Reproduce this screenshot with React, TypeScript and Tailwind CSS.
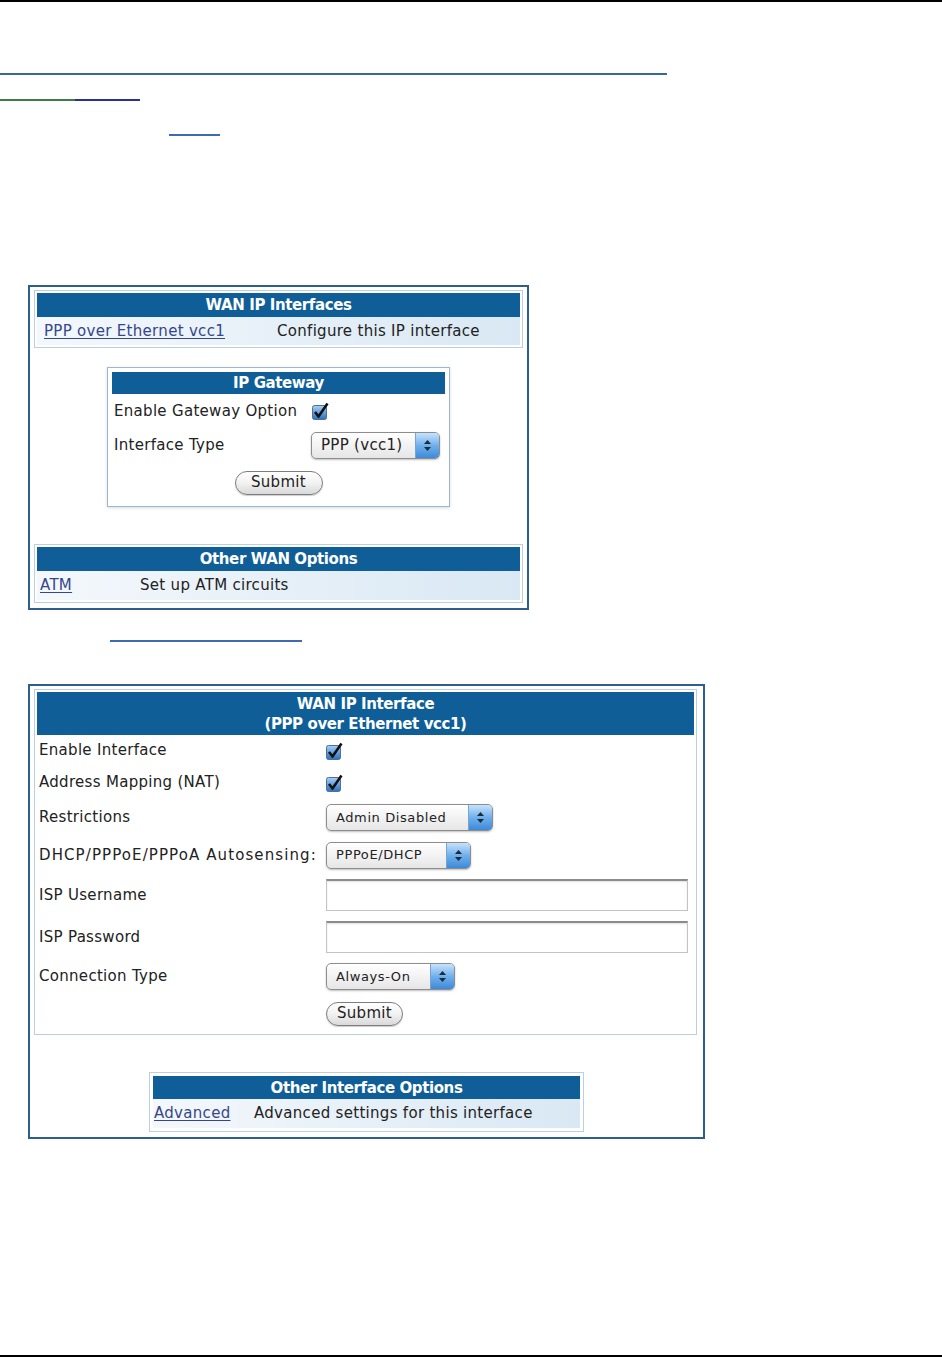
import type {ReactNode} from 'react';

const FONT = "font-['DejaVu_Sans','Verdana',sans-serif]";

function Checkbox() {
  return (
    <svg width="17" height="18" viewBox="0 0 17 18" className="block">
      <defs>
        <linearGradient id="cbfill" x1="0" y1="0" x2="0" y2="1">
          <stop offset="0" stopColor="#a8d0f4" />
          <stop offset="1" stopColor="#2a6fc2" />
        </linearGradient>
      </defs>
      <rect x="0.5" y="3.5" width="14" height="14" rx="2" fill="url(#cbfill)" stroke="#50708f" />
      <path d="M3 10 L6.5 14.5 L15.5 1.5" stroke="#111" strokeWidth="2.6" fill="none" strokeLinejoin="round" />
    </svg>
  );
}

function Select({label, width, small}: {label: string; width: string; small?: boolean}) {
  return (
    <div
      className={`flex h-[27px] ${width} overflow-hidden rounded-[5px] border border-[#8d8d8d] bg-gradient-to-b from-white to-[#e6e6e6] shadow-[0_1px_2px_rgba(0,0,0,0.25)]`}>
      <div
        className={`flex-1 flex items-center pl-[9px] text-[#222] ${small ? 'text-[13px] tracking-[0.6px]' : 'text-[15px]'}`}>
        {label}
      </div>
      <div className="w-[24px] flex flex-col items-center justify-center gap-[3px] bg-gradient-to-b from-[#c6e2fb] via-[#6fb0ec] to-[#3d8ad8] border-l border-[#7aa4cf]">
        <svg width="7" height="4" viewBox="0 0 7 4">
          <path d="M0 4 L3.5 0 L7 4 Z" fill="#1d2a3a" />
        </svg>
        <svg width="7" height="4" viewBox="0 0 7 4">
          <path d="M0 0 L3.5 4 L7 0 Z" fill="#1d2a3a" />
        </svg>
      </div>
    </div>
  );
}

function SubmitButton({width}: {width: string}) {
  return (
    <div
      className={`flex h-[24px] ${width} items-center justify-center rounded-full border border-[#7d7d7d] bg-gradient-to-b from-white via-[#f2f2f2] to-[#d9d9d9] text-[15px] text-[#222] shadow-[0_1px_1px_rgba(0,0,0,0.2)]`}>
      Submit
    </div>
  );
}

function TextInput() {
  return (
    <div className="h-[32px] w-[362px] border border-[#c4c4c4] border-t-2 border-t-[#8c8c8c] bg-white shadow-[inset_0_1px_2px_rgba(0,0,0,0.12)]" />
  );
}

function Header({children, height = 'h-[24px]'}: {children: ReactNode; height?: string}) {
  return (
    <div
      className={`${height} flex flex-col items-center justify-center bg-[#0f5e97] text-white font-bold text-[15px] tracking-[-0.4px] leading-[20px]`}>
      {children}
    </div>
  );
}

function Link({children}: {children: ReactNode}) {
  return <span className="text-[#34478c] underline underline-offset-2 decoration-1">{children}</span>;
}

export default function App() {
  return (
    <div className={`w-[942px] h-[1357px] bg-white flex flex-col ${FONT} tracking-[0.3px] text-[15px] text-[#222]`}>
      {/* page rules and link underlines */}
      <div className="h-[2px] bg-black" />
      <div className="mt-[71px] h-[2px] w-[667px] bg-[#35679c]" />
      <div className="mt-[24px] flex h-[2px] w-[140px]">
        <div className="w-[75px] bg-[#3f7a4a]" />
        <div className="flex-1 bg-[#2a2fa0]" />
      </div>
      <div className="mt-[33px] ml-[169px] h-[2px] w-[51px] bg-[#3d6ab2]" />

      {/* first screenshot */}
      <div className="mt-[149px] ml-[28px] w-[501px] h-[325px] border-2 border-[#2d5e8c] bg-white">
        <div className="ml-[4px] mt-[3px] w-[489px] border border-[#b9d0e3] p-[2px]">
          <Header>WAN IP Interfaces</Header>
          <div className="h-[28px] flex items-center bg-gradient-to-r from-[#f4f8fc] to-[#d9e8f4]">
            <div className="w-[240px] pl-[7px]">
              <Link>PPP over Ethernet vcc1</Link>
            </div>
            <div>Configure this IP interface</div>
          </div>
        </div>

        <div className="mx-auto mt-[19px] w-[343px] border border-[#9bb8d2] p-[4px] shadow-[0_1px_3px_rgba(0,0,0,0.15)]">
          <Header height="h-[22px]">IP Gateway</Header>
          <div className="h-[34px] flex items-center pl-[2px]">
            <div className="w-[198px]">Enable Gateway Option</div>
            <Checkbox />
          </div>
          <div className="h-[35px] flex items-center pl-[2px]">
            <div className="w-[197px]">Interface Type</div>
            <Select label="PPP (vcc1)" width="w-[129px]" />
          </div>
          <div className="h-[39px] flex items-center justify-center">
            <SubmitButton width="w-[88px]" />
          </div>
        </div>

        <div className="ml-[4px] mt-[37px] w-[489px] border border-[#b9d0e3] p-[2px]">
          <Header>Other WAN Options</Header>
          <div className="h-[29px] flex items-center bg-gradient-to-r from-[#f4f8fc] to-[#d9e8f4]">
            <div className="w-[103px] pl-[3px]">
              <Link>ATM</Link>
            </div>
            <div>Set up ATM circuits</div>
          </div>
        </div>
      </div>

      <div className="mt-[30px] ml-[110px] h-[2px] w-[192px] bg-[#3d6ab2]" />

      {/* second screenshot */}
      <div className="mt-[42px] ml-[28px] w-[677px] h-[455px] border-2 border-[#2d5e8c] bg-white">
        <div className="ml-[4px] mt-[3px] w-[663px] border border-[#b9d0e3] p-[2px]">
          <Header height="h-[43px]">
            <div>WAN IP Interface</div>
            <div>(PPP over Ethernet vcc1)</div>
          </Header>
          <div className="h-[31px] flex items-center">
            <div className="w-[289px] pl-[2px]">Enable Interface</div>
            <Checkbox />
          </div>
          <div className="h-[33px] flex items-center">
            <div className="w-[289px] pl-[2px]">Address Mapping (NAT)</div>
            <Checkbox />
          </div>
          <div className="h-[37px] flex items-center">
            <div className="w-[289px] pl-[2px]">Restrictions</div>
            <Select label="Admin Disabled" width="w-[167px]" small />
          </div>
          <div className="h-[38px] flex items-center">
            <div className="w-[289px] pl-[2px] tracking-[1.1px]">DHCP/PPPoE/PPPoA Autosensing:</div>
            <Select label="PPPoE/DHCP" width="w-[145px]" small />
          </div>
          <div className="h-[42px] flex items-center">
            <div className="w-[289px] pl-[2px]">ISP Username</div>
            <TextInput />
          </div>
          <div className="h-[42px] flex items-center">
            <div className="w-[289px] pl-[2px]">ISP Password</div>
            <TextInput />
          </div>
          <div className="h-[37px] flex items-center">
            <div className="w-[289px] pl-[2px]">Connection Type</div>
            <Select label="Always-On" width="w-[129px]" small />
          </div>
          <div className="h-[37px] flex items-center">
            <div className="w-[289px]" />
            <SubmitButton width="w-[77px]" />
          </div>
        </div>

        <div className="mx-auto mt-[37px] w-[435px] border border-[#b9d0e3] p-[3px]">
          <Header height="h-[23px]">Other Interface Options</Header>
          <div className="h-[29px] flex items-center bg-gradient-to-r from-[#f4f8fc] to-[#d9e8f4]">
            <div className="w-[101px] pl-[1px]">
              <Link>Advanced</Link>
            </div>
            <div>Advanced settings for this interface</div>
          </div>
        </div>
      </div>

      <div className="mt-auto h-[2px] bg-black" />
    </div>
  );
}
